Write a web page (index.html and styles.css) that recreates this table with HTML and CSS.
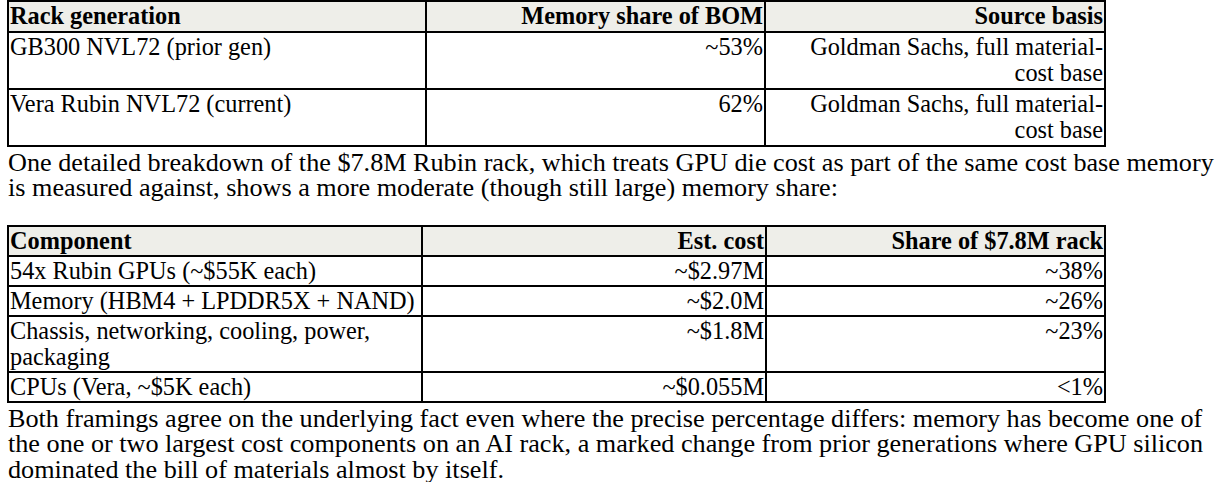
FILE: index.html
```html
<!DOCTYPE html>
<html lang="en">
<head>
<meta charset="utf-8">
<title>Rack BOM memory share</title>
<link rel="stylesheet" href="styles.css">
</head>
<body>
<table class="grid grid-a">
  <colgroup>
    <col class="a1"><col class="a2"><col class="a3">
  </colgroup>
  <thead>
    <tr><th class="l">Rack generation</th><th class="r">Memory share of BOM</th><th class="r">Source basis</th></tr>
  </thead>
  <tbody>
    <tr><td class="l">GB300 NVL72 (prior gen)</td><td class="r">~53%</td><td class="r src">Goldman Sachs, full material-cost base</td></tr>
    <tr><td class="l">Vera Rubin NVL72 (current)</td><td class="r">62%</td><td class="r src">Goldman Sachs, full material-cost base</td></tr>
  </tbody>
</table>
<p class="text gap">One detailed breakdown of the $7.8M Rubin rack, which treats GPU die cost as part of the same cost base memory is measured against, shows a more moderate (though still large) memory share:</p>
<table class="grid grid-b">
  <colgroup>
    <col class="b1"><col class="b2"><col class="b3">
  </colgroup>
  <thead>
    <tr><th class="l">Component</th><th class="r">Est. cost</th><th class="r">Share of $7.8M rack</th></tr>
  </thead>
  <tbody>
    <tr><td class="l">54x Rubin GPUs (~$55K each)</td><td class="r">~$2.97M</td><td class="r">~38%</td></tr>
    <tr><td class="l">Memory (HBM4 + LPDDR5X + NAND)</td><td class="r">~$2.0M</td><td class="r">~26%</td></tr>
    <tr><td class="l">Chassis, networking, cooling, power, packaging</td><td class="r">~$1.8M</td><td class="r">~23%</td></tr>
    <tr><td class="l">CPUs (Vera, ~$5K each)</td><td class="r">~$0.055M</td><td class="r">&lt;1%</td></tr>
  </tbody>
</table>
<p class="text">Both framings agree on the underlying fact even where the precise percentage differs: memory has become one of the one or two largest cost components on an AI rack, a marked change from prior generations where GPU silicon dominated the bill of materials almost by itself.</p>
</body>
</html>
```
FILE: styles.css
```css
html, body {
  background: #ffffff;
}
body {
  margin: 0;
  padding: 0 2px 0 7px;
  font-family: "Liberation Serif", "Times New Roman", serif;
  font-size: 26.2px;
  line-height: 25.5px;
  color: #000000;
}
.grid {
  border-collapse: separate;
  border-spacing: 0;
  border: 1px solid #000000;
  table-layout: fixed;
  width: 1097px;
  margin: 0;
}
.grid th,
.grid td {
  border: 1px solid #000000;
  padding: 1px;
  vertical-align: top;
  font-size: 24.3px;
}
.grid th {
  background: #eeeee9;
  font-weight: bold;
}
.grid-a th,
.grid-a td {
  line-height: 26.5px;
}
.grid-b th,
.grid-b td {
  line-height: 26px;
}
.grid-a .src {
  padding-left: 12px;
}
.l { text-align: left; }
.r { text-align: right; }
.a1 { width: 418px; }
.a2 { width: 339px; }
.a3 { width: 340px; }
.b1 { width: 414px; }
.b2 { width: 344px; }
.b3 { width: 339px; }
.text {
  margin: 3px 0 0 1px;
}
.gap {
  margin-bottom: 24px;
}
```
